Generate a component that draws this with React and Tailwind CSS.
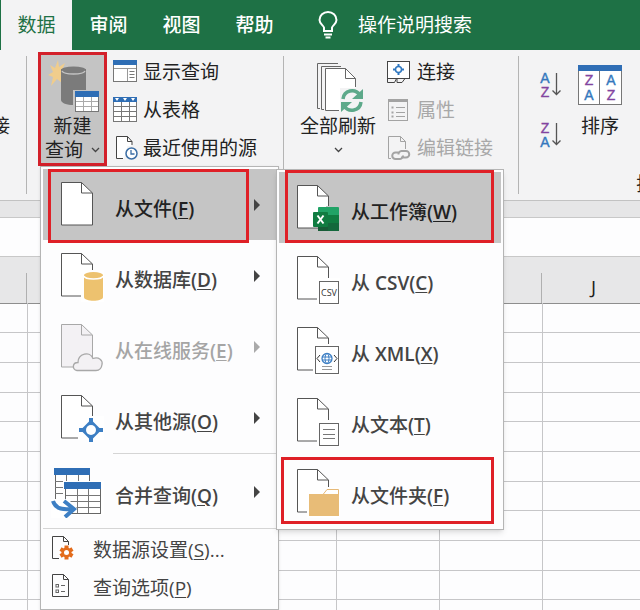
import { Fragment } from "react";

const TABS = ["审阅", "视图", "帮助"];

const COLUMNS = [
  { width: "w-[27px]", label: "" },
  { width: "w-[103px]", label: "" },
  { width: "w-[103px]", label: "" },
  { width: "w-[103px]", label: "" },
  { width: "w-[103px]", label: "" },
  { width: "w-[103px]", label: "" },
  { width: "w-[104px]", label: "J" },
];

const ROWS = Array.from({ length: 11 }, (_, index) => index);

/* ---------- small ribbon icons ---------- */

const BulbIcon = () => (
  <svg width="22" height="28" viewBox="0 0 22 28" fill="none" stroke="#fff" strokeWidth="2">
    <path d="M7 20v-3.500C6 14 2.500 12.500 2.500 9a8.500 8 0 0 1 17 0c0 3.500-3.500 5-4.500 7.500V20z" />
    <path d="M7 23.500h8M8.500 26.500h5" />
  </svg>
);

const Chevron = () => (
  <svg width="9" height="6" viewBox="0 0 9 6" fill="none" stroke="#444" strokeWidth="1.300">
    <path d="M1 1l3.500 3.500L8 1" />
  </svg>
);

const NewQueryIcon = () => (
  <svg width="56" height="57" viewBox="0 0 56 57">
    <path
      d="M13 3l1 7 6-4-3 7 4 3-5 2 1 8-5-4-6 7 2-9-5-2 5-3-3-7 5 3z"
      fill="#f0cd8c"
    />
    <path d="M16 12v31c0 3 6 5 12.500 5S41 46 41 43V12z" fill="#7b7b7b" />
    <ellipse cx="28.500" cy="13" rx="12.500" ry="3.500" fill="#7b7b7b" />
    <path d="M17 14c2 4 21 4 23 0" fill="none" stroke="#c4c4c4" strokeWidth="1.500" />
    <rect x="28" y="33" width="28" height="24" fill="#c4c4c4" />
    <rect x="30.500" y="34.500" width="23" height="20" fill="#fff" stroke="#777" />
    <rect x="30" y="34" width="24" height="6" fill="#2f6eb5" />
    <path d="M38.500 40v14M46.500 40v14M31 44.500h22M31 49.500h22" stroke="#aaa" />
  </svg>
);

const ShowQueriesIcon = () => (
  <svg width="26" height="26" viewBox="0 0 26 26">
    <rect x="1.500" y="1.500" width="23" height="21" fill="#fff" stroke="#777" />
    <rect x="1" y="1" width="24" height="5" fill="#2f6eb5" />
    <path d="M15.500 10v12M2 9.500h22" stroke="#999" />
    <path d="M17.500 12.500h5M17.500 15.500h5M17.500 18.500h5" stroke="#777" />
  </svg>
);

const FromTableIcon = () => (
  <svg width="26" height="26" viewBox="0 0 26 26">
    <rect x="1.500" y="1.500" width="23" height="23" fill="#fff" stroke="#777" />
    <rect x="1" y="0" width="24" height="5" fill="#2f6eb5" />
    <path d="M3 1h4L5 4zM11 1h4l-2 3zM19 1h4l-2 3z" fill="#fff" />
    <path d="M9.500 5v19M17.500 5v19M2 9.500h22M2 14.500h22M2 19.500h22" stroke="#777" />
  </svg>
);

const RecentIcon = () => (
  <svg width="26" height="26" viewBox="0 0 26 26" fill="none">
    <path d="M12 23.500H4.500v-22h11l4 5V11h-4" fill="#fff" stroke="none" />
    <path d="M11 23.500H4.500v-22h11l4.500 5V10M15.500 1.500v5H20" stroke="#444" />
    <circle cx="19.500" cy="18.500" r="5.500" fill="#fff" stroke="#3c6ea5" strokeWidth="1.500" />
    <path d="M19 15v4h3.500" stroke="#3c6ea5" strokeWidth="1.300" />
  </svg>
);

const ConnectionIcon = () => (
  <svg width="26" height="26" viewBox="0 0 26 26" fill="none">
    <rect x="1.500" y="2.500" width="22" height="17" fill="#fff" stroke="#444" />
    <path d="M1.500 20v3.500h7l2-4M11 20v3.500h5l3-4" stroke="#444" />
    <circle cx="12.500" cy="10.500" r="3" stroke="#2f77c0" strokeWidth="1.500" />
    <path d="M12.500 5v3M12.500 13v3M7 10.500h3M15 10.500h3" stroke="#2f77c0" strokeWidth="2" />
  </svg>
);

const PropertiesIcon = () => (
  <svg width="26" height="26" viewBox="0 0 26 26" fill="none" stroke="#a3a3a3">
    <rect x="2.500" y="2.500" width="19" height="21" />
    <path d="M2 3.500h20" strokeWidth="3" />
    <path d="M10 10.500h9M10 15.500h9M10 19.500h9" />
    <path d="M5.500 10.500h2M5.500 15.500h2M5.500 19.500h2" strokeWidth="2" />
  </svg>
);

const EditLinksIcon = () => (
  <svg width="26" height="26" viewBox="0 0 26 26" fill="none" stroke="#a3a3a3">
    <path d="M5 23.500H2.500v-22h12l5 5V14M14.500 1.500v5h5" />
    <path
      d="M13 17.500H9.500a3.200 3.200 0 0 0 0 6.500H14a3.200 3.200 0 0 0 3-3.500M15 22.500h5a3.200 3.200 0 0 0 0-6.500h-4.500a3.200 3.200 0 0 0-3 3.500"
      strokeWidth="2"
    />
  </svg>
);

const RefreshAllIcon = () => (
  <svg width="50" height="57" viewBox="0 0 50 57" fill="none">
    <path d="M7 51.500H4.500v-45H25M11 52.500H8.500v-43H28" stroke="#666" />
    <path d="M12.500 53.500v-42h20l10 10v32z" fill="#fff" />
    <path d="M26 53.500H12.500v-42h20l10 10V30M32.500 11.500v10h10" stroke="#666" />
    <path d="M27 31h23v26H27z" fill="#f3f3f4" />
    <path d="M30 42c1-9 12-11 17-4M48 45c-1 9-12 11-17 4" stroke="#5da98a" strokeWidth="3.500" />
    <path d="M50 32v10H39zM28 55V45h11z" fill="#5da98a" />
  </svg>
);

const SortIcon = ({ first, second }) => (
  <svg
    width="24"
    height="28"
    viewBox="0 0 24 28"
    className="overflow-visible font-['Liberation_Sans',sans-serif] text-[14px]"
  >
    <g textAnchor="middle">
      <text x="6" y="12" fill={first === "A" ? "#3478bd" : "#8344a0"} stroke={first === "A" ? "#3478bd" : "#8344a0"} strokeWidth="0.400">
        {first}
      </text>
      <text x="6" y="26" fill={second === "A" ? "#3478bd" : "#8344a0"} stroke={second === "A" ? "#3478bd" : "#8344a0"} strokeWidth="0.400">
        {second}
      </text>
    </g>
    <path d="M17.500 2v22M13.500 19.500l4 4 4-4" fill="none" stroke="#555" strokeWidth="1.300" />
  </svg>
);

const SortDialogIcon = () => (
  <svg
    width="46"
    height="57"
    viewBox="0 0 46 57"
    className="font-['Liberation_Sans',sans-serif] text-[14px]"
  >
    <rect x="1.500" y="8.500" width="43" height="39" fill="#fff" stroke="#777" />
    <rect x="1" y="8" width="44" height="6" fill="#2f6eb5" />
    <path d="M22.500 14v33" stroke="#777" />
    <g textAnchor="middle" strokeWidth="0.400">
      <text x="12" y="28" fill="#8344a0" stroke="#8344a0">Z</text>
      <text x="12" y="43" fill="#3478bd" stroke="#3478bd">A</text>
      <text x="34" y="28" fill="#3478bd" stroke="#3478bd">A</text>
      <text x="34" y="43" fill="#8344a0" stroke="#8344a0">Z</text>
    </g>
  </svg>
);

/* ---------- menu icons ---------- */

// Every "from ..." icon is the same sheet of paper with a badge over its corner
const DocIcon = ({ muted, children }) => (
  <svg width="44" height="52" viewBox="0 0 44 52" fill="none">
    <path
      d="M1.500 3.500h20l11 10.500v32h-31z"
      fill={muted ? "#f3f1f4" : "#fff"}
      stroke={muted ? "#a8a8a8" : "#555"}
    />
    <path d="M21.500 3.500v10.500h11" stroke={muted ? "#a8a8a8" : "#555"} />
    {children}
  </svg>
);

const DatabaseBadge = () => (
  <>
    <path d="M21 20h23v32H21z" fill="#fff" />
    <path d="M24 25v22c0 5 19 5 19 0V25z" fill="#edc26f" />
    <ellipse cx="33.500" cy="25" rx="9.500" ry="3" fill="#edc26f" />
    <path d="M24 26c1 4 18 4 19 0" stroke="#fff" strokeWidth="1.500" />
  </>
);

const CloudBadge = () => (
  <path
    d="M17 49.500c-5-1-5-8 1-8 0-9 12-12 15-4 6-2 10 2 9 6-.5 4-2 6-6 6z"
    fill="#f3f1f4"
    stroke="#a8a8a8"
    strokeWidth="1.300"
  />
);

const TargetBadge = () => (
  <>
    <path d="M18 48V33l8-9h18v24z" fill="#fff" />
    <path d="M31 29l9 9-9 9-9-9z" fill="#3d7fc4" stroke="#3d7fc4" strokeWidth="2" />
    <path d="M31 26v24M19 38h24" stroke="#3d7fc4" strokeWidth="4" />
    <circle cx="31" cy="38" r="5" fill="#fff" />
  </>
);

const ExcelBadge = () => (
  <>
    <path d="M30 24h5v3h-5z" fill="#c5c5c5" />
    <rect x="22" y="25" width="21" height="24" rx="1" fill="#21a366" />
    <path d="M22 33h10v16H22z" fill="#185c37" />
    <path d="M32 33h11v8H32z" fill="#107c41" />
    <path d="M32 41h11v8H32z" fill="#14683c" />
    <rect x="17" y="30" width="15" height="15" rx="1" fill="#107c41" />
    <path d="M21.500 33.500l6 8M27.500 33.500l-6 8" stroke="#fff" strokeWidth="2" />
  </>
);

const CsvBadge = () => (
  <>
    <path d="M21 25h23v27H21z" fill="#fff" />
    <rect x="23.500" y="28.500" width="19" height="22" fill="#fff" stroke="#666" />
    <text x="33" y="43" textAnchor="middle" fill="#333" className="font-['Open_Sans',sans-serif] text-[9px]">
      CSV
    </text>
  </>
);

const XmlBadge = () => (
  <>
    <path d="M17 20h27v32H17z" fill="#fff" />
    <rect x="19.500" y="22.500" width="23" height="27" fill="#fff" stroke="#666" />
    <path d="M24 31l-3 3.500 3 3.500M38 31l3 3.500-3 3.500" stroke="#333" />
    <circle cx="31" cy="34.500" r="5" stroke="#3d7fc4" strokeWidth="1.300" />
    <ellipse cx="31" cy="34.500" rx="2" ry="5" stroke="#3d7fc4" />
    <path d="M26 33h10M26 36h10" stroke="#3d7fc4" />
    <path d="M26 42.500h10M26 45.500h10" stroke="#999" />
  </>
);

const TextBadge = () => (
  <>
    <path d="M21 25h23v27H21z" fill="#fff" />
    <rect x="23.500" y="28.500" width="19" height="22" fill="#fff" stroke="#666" />
    <path d="M27 34.500h12M27 39.500h12M27 43.500h12" stroke="#777" />
  </>
);

const FolderBadge = () => (
  <>
    <path d="M11 21h33v31H11z" fill="#fff" />
    <path d="M27 28.500l4-5h11.500v5" fill="#fff" stroke="#e6b978" />
    <path d="M13 28h30v22H13z" fill="#e8bc77" />
  </>
);

const MergeIcon = () => (
  <svg width="53" height="52" viewBox="0 0 53 52" fill="none">
    <rect x="4.500" y="3.500" width="34" height="30" fill="#fff" stroke="#666" />
    <rect x="3" y="2" width="36" height="7" fill="#2f6eb5" />
    <path d="M15.500 9v24M27.500 9v24M4 15.500h34M4 21.500h34M4 27.500h34" stroke="#777" />
    <path d="M12 15h41v34H12z" fill="#fff" />
    <rect x="14.500" y="17.500" width="35" height="30" fill="#fff" stroke="#666" />
    <rect x="13" y="16" width="37" height="7" fill="#2f6eb5" />
    <path d="M26.500 23v24M37.500 23v24M15 29.500h34M15 35.500h34M15 41.500h34" stroke="#777" />
    <path d="M0 33h17l9 9-11 10H0z" fill="#fff" />
    <path d="M2 35c2 7 9 9 18 8" stroke="#3d7fc4" strokeWidth="4" />
    <path d="M13 35l10 8-9 8" stroke="#3d7fc4" strokeWidth="4" />
  </svg>
);

const SourceSettingsIcon = () => (
  <svg width="24" height="26" viewBox="0 0 24 26" fill="none">
    <path d="M8 23.500H1.500v-22h11l5 5V10M12.500 1.500v5h5" stroke="#444" />
    <path d="M15.500 10.500v14M9.500 14l12 7M21.500 14l-12 7" stroke="#e36c1c" strokeWidth="4" />
    <circle cx="15.500" cy="17.500" r="5" fill="#e36c1c" />
    <circle cx="15.500" cy="17.500" r="2.500" fill="#fff" />
  </svg>
);

const OptionsIcon = () => (
  <svg width="24" height="26" viewBox="0 0 24 26" fill="none">
    <path d="M1.500 1.500h11l5 5v17h-16zM12.500 1.500v5h5" stroke="#444" />
    <rect x="5" y="11.500" width="2.500" height="2.500" stroke="#666" />
    <rect x="5" y="17" width="2.500" height="2.500" stroke="#666" />
    <path d="M10 12.500h4M10 18.500h4" stroke="#666" />
  </svg>
);

/* ---------- menu data ---------- */

const SOURCES = [
  { label: "从文件", hotkey: "F", icon: <DocIcon />, active: true, mark: "-bottom-[3px] left-[5px] right-[27px] top-0" },
  { label: "从数据库", hotkey: "D", icon: <DocIcon><DatabaseBadge /></DocIcon> },
  { label: "从在线服务", hotkey: "E", icon: <DocIcon muted><CloudBadge /></DocIcon>, disabled: true },
  { label: "从其他源", hotkey: "O", icon: <DocIcon><TargetBadge /></DocIcon> },
];

const FILE_SOURCES = [
  { label: "从工作簿", hotkey: "W", icon: <DocIcon><ExcelBadge /></DocIcon>, active: true, mark: "-top-[2px] bottom-0 left-[6px] right-[7px]" },
  { label: "从", format: "CSV", hotkey: "C", icon: <DocIcon><CsvBadge /></DocIcon> },
  { label: "从", format: "XML", hotkey: "X", icon: <DocIcon><XmlBadge /></DocIcon> },
  { label: "从文本", hotkey: "T", icon: <DocIcon><TextBadge /></DocIcon> },
  { label: "从文件夹", hotkey: "F", icon: <DocIcon><FolderBadge /></DocIcon>, mark: "bottom-[3px] left-[2px] right-[7px] top-[1px]" },
];

const MenuItem = ({ item, arrow }) => (
  <button
    type="button"
    role="menuitem"
    disabled={item.disabled}
    className={`relative flex h-[71px] w-full items-center gap-[11px] pl-2 text-left font-medium ${
      item.active ? "bg-[#c5c5c5] text-[#222]" : item.disabled ? "text-[#a5a5a5]" : "text-[#444]"
    }`}
  >
    <span className="flex w-[53px] shrink-0 justify-end">{item.icon}</span>
    <span className="flex-1 pt-2 whitespace-nowrap">
      {item.label}
      <span className="font-semibold">
        {item.format && ` ${item.format}`}(<u className="underline-offset-2">{item.hotkey}</u>)
      </span>
    </span>
    {arrow && (
      <svg width="6" height="12" viewBox="0 0 6 12" className="mr-4">
        <path d="M0 0l6 6-6 6z" fill={item.disabled ? "#aaa" : "#444"} />
      </svg>
    )}
    {item.mark && <span className={`absolute border-[3px] border-[#df2027] ${item.mark}`} />}
  </button>
);

const FooterItem = ({ icon, label, hotkey, suffix }) => (
  <button type="button" role="menuitem" className="flex h-[38px] w-full items-center gap-[18px] pl-2 text-left text-[#444]">
    {icon}
    <span className="whitespace-nowrap pt-1">
      {label}(<u className="underline-offset-2">{hotkey}</u>){suffix}
    </span>
  </button>
);

const QueryMenu = () => (
  <div
    role="menu"
    className="absolute left-[2px] top-full z-10 w-[239px] border border-[#b5b5b5] bg-[#fdfdfe] p-[2px] pb-[4px] shadow-sm"
  >
    {SOURCES.map((item) => (
      <Fragment key={item.label}>
        {item.active ? (
          <div className="relative">
            <MenuItem item={item} arrow />
            <div
              role="menu"
              className="absolute left-full top-0 z-10 w-[228px] border border-[#b5b5b5] bg-[#fdfdfe] p-[2px] shadow-md"
            >
              {FILE_SOURCES.map((source) => (
                <MenuItem key={source.hotkey} item={source} />
              ))}
            </div>
          </div>
        ) : (
          <MenuItem item={item} arrow />
        )}
      </Fragment>
    ))}
    <hr className="mb-[2px] ml-[70px] border-[#d5d5d5]" />
    <MenuItem item={{ label: "合并查询", hotkey: "Q", icon: <MergeIcon /> }} arrow />
    <hr className="mt-px border-[#d5d5d5]" />
    <FooterItem icon={<SourceSettingsIcon />} label="数据源设置" hotkey="S" suffix="..." />
    <FooterItem icon={<OptionsIcon />} label="查询选项" hotkey="P" />
  </div>
);

/* ---------- ribbon ---------- */

const RibbonButton = ({ icon, label, disabled }) => (
  <button
    type="button"
    disabled={disabled}
    className={`flex h-[38px] items-center gap-[5px] whitespace-nowrap ${disabled ? "text-[#a8a8a8]" : ""}`}
  >
    {icon}
    <span>{label}</span>
  </button>
);

const Divider = () => <div className="my-[6px] w-px shrink-0 bg-[#b4b4b4]" />;

const Ribbon = () => (
  <div className="flex h-[151px] border-b border-[#c2c2c2] bg-[#f3f3f4] leading-6">
    <div className="flex w-[26px] shrink-0 justify-start overflow-hidden pt-[64px]">
      <span className="-ml-[9px]">接</span>
    </div>
    <Divider />
    <div className="flex w-[256px] shrink-0 pl-[11px] pt-[2px]">
      <div className="relative h-[114px]">
        <button
          type="button"
          aria-haspopup="menu"
          className="flex h-full w-[69px] flex-col items-center border-[3px] border-[#d3202a] bg-[#c4c4c4] pt-[2px]"
        >
          <NewQueryIcon />
          <span>新建</span>
          <span className="flex items-center gap-2">
            查询 <Chevron />
          </span>
        </button>
        <QueryMenu />
      </div>
      <div className="flex flex-col pl-[5px] pt-px">
        <RibbonButton icon={<ShowQueriesIcon />} label="显示查询" />
        <RibbonButton icon={<FromTableIcon />} label="从表格" />
        <RibbonButton icon={<RecentIcon />} label="最近使用的源" />
      </div>
    </div>
    <Divider />
    <div className="flex w-[234px] shrink-0 pl-4 pt-[3px]">
      <button type="button" className="flex w-[76px] flex-col items-center pt-[4px]">
        <RefreshAllIcon />
        <span className="whitespace-nowrap">全部刷新</span>
        <span className="flex h-6 items-center">
          <Chevron />
        </span>
      </button>
      <div className="flex flex-col pl-[10px]">
        <RibbonButton icon={<ConnectionIcon />} label="连接" />
        <RibbonButton icon={<PropertiesIcon />} label="属性" disabled />
        <RibbonButton icon={<EditLinksIcon />} label="编辑链接" disabled />
      </div>
    </div>
    <Divider />
    <div className="flex min-w-[240px] flex-col justify-between overflow-hidden pb-1 pl-5">
      <div className="flex gap-[14px]">
        <div className="flex flex-col gap-[22px] pt-[21px]">
          <button type="button" aria-label="升序">
            <SortIcon first="A" second="Z" />
          </button>
          <button type="button" aria-label="降序">
            <SortIcon first="Z" second="A" />
          </button>
        </div>
        <button type="button" className="flex flex-col items-center self-start pt-[7px]">
          <SortDialogIcon />
          <span>排序</span>
        </button>
      </div>
      <span className="whitespace-nowrap pl-[97px]">排序和筛选</span>
    </div>
  </div>
);

const Sheet = () => (
  <table className="w-full table-fixed border-collapse">
    <colgroup>
      {COLUMNS.map((column, index) => (
        <col key={index} className={column.width} />
      ))}
      <col />
    </colgroup>
    <thead>
      <tr className="h-[46px] border-b border-[#8e8e8e] bg-[#e7e7e8]">
        {COLUMNS.map((column, index) => (
          <th key={index} className="p-0 align-bottom font-normal">
            <div className="flex h-[30px] items-center justify-center border-r border-[#b0b0b0]">{column.label}</div>
          </th>
        ))}
        <th />
      </tr>
    </thead>
    <tbody>
      {ROWS.map((row) => (
        <tr key={row} className={row % 3 === 0 ? "h-[29px]" : "h-[30px]"}>
          {COLUMNS.map((_, index) => (
            <td key={index} className="border-b border-r border-[#c6c6c8] p-0" />
          ))}
          <td className="border-b border-[#c6c6c8] p-0" />
        </tr>
      ))}
    </tbody>
  </table>
);

export default function App() {
  return (
    <div className="h-screen overflow-hidden bg-[#fdfdfe] font-['Open_Sans','Noto_Sans_CJK_SC',sans-serif] text-[19px] text-[#222]">
      <header className="flex h-[50px] items-stretch bg-[#1e7145] text-white">
        <nav className="flex pl-px font-medium">
          <button type="button" className="w-[71px] bg-[#f3f3f4] font-normal text-[#1e7145]">
            数据
          </button>
          {TABS.map((tab) => (
            <button key={tab} type="button" className="w-[73px]">
              {tab}
            </button>
          ))}
        </nav>
        <button type="button" className="ml-[26px] flex items-center gap-[19px] whitespace-nowrap">
          <BulbIcon />
          操作说明搜索
        </button>
      </header>
      <Ribbon />
      <div className="h-[17px] border-b border-[#c8c8c8] bg-[#e6e6e7]" />
      <div className="h-[39px] border-b border-[#c8c8c8]" />
      <Sheet />
    </div>
  );
}
